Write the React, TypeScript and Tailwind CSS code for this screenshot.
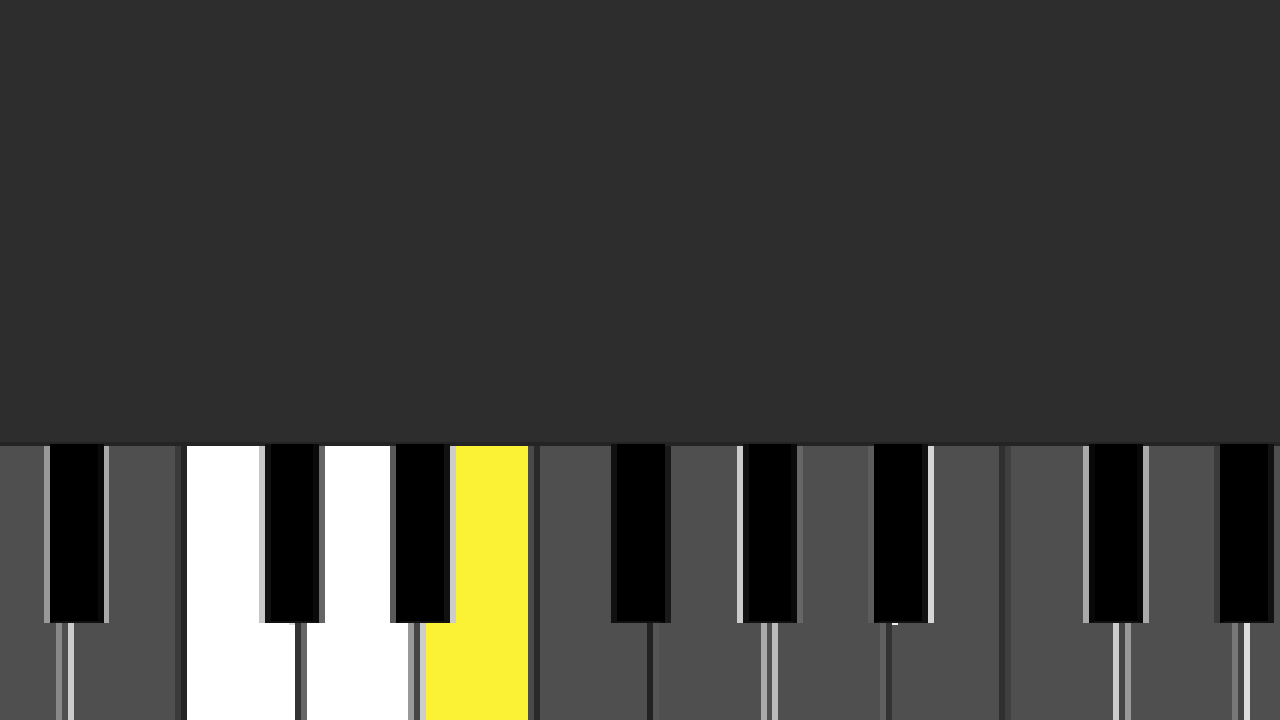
import React from "react";

const whiteKeys: string[] = [
  "w-[62px] bg-[#4f4f4f] border-r-[6px] border-r-[#888888]",
  "w-[6px] bg-[#4f4f4f]",
  "w-[113px] bg-[#4f4f4f] border-x-[6px] border-l-[#cccccc] border-r-[#3a3a3a]",
  "w-[120px] bg-white border-x-[6px] border-l-[#252525] border-r-[#333333]",
  "w-[113px] bg-white border-x-[6px] border-l-[#666666] border-r-[#999999]",
  "w-[6px] bg-[#444444]",
  "w-[114px] bg-[#fbf236] border-x-[6px] border-l-[#cccccc] border-r-[#4a4a4a]",
  "w-[119px] bg-[#4f4f4f] border-x-[6px] border-l-[#2a2a2a] border-r-[#222222]",
  "w-[114px] bg-[#4f4f4f] border-x-[6px] border-l-[#555555] border-r-[#aaaaaa]",
  "w-[5px] bg-[#4f4f4f]",
  "w-[114px] bg-[#4f4f4f] border-x-[6px] border-l-[#bbbbbb] border-r-[#606060]",
  "w-[119px] bg-[#4f4f4f] border-x-[6px] border-l-[#333333] border-r-[#2f2f2f]",
  "w-[114px] bg-[#4f4f4f] border-x-[6px] border-l-[#3f3f3f] border-r-[#cccccc]",
  "w-[6px] bg-[#444444]",
  "w-[113px] bg-[#4f4f4f] border-x-[6px] border-l-[#999999] border-r-[#777777]",
  "w-[6px] bg-[#444444]",
  "w-[114px] bg-[#4f4f4f] border-l-[6px] border-l-[#dddddd]",
];

type BK = { pos: string; ls: string; body: string; rs: string; mark?: string };

const blackKeys: BK[] = [
  { pos: "left-[44px] w-[65px]", ls: "bg-[#999999]", body: "border-l-[#000000] border-r-[#0a0a0a]", rs: "w-[5px] bg-[#aaaaaa]" },
  { pos: "left-[259px] w-[66px]", ls: "bg-[#c8c8c8]", body: "border-l-[#111111] border-r-[#0a0a0a]", rs: "w-[6px] bg-[#666666]", mark: "left-[30px] bg-[#dddddd]" },
  { pos: "left-[390px] w-[66px]", ls: "bg-[#5a5a5a]", body: "border-l-[#000000] border-r-[#111111]", rs: "w-[6px] bg-[#cccccc]" },
  { pos: "left-[605px] w-[66px]", ls: "bg-[#4f4f4f]", body: "border-l-[#111111] border-r-[#000000]", rs: "w-[6px] bg-[#1a1a1a]" },
  { pos: "left-[737px] w-[66px]", ls: "bg-[#cccccc]", body: "border-l-[#111111] border-r-[#0a0a0a]", rs: "w-[6px] bg-[#666666]" },
  { pos: "left-[868px] w-[66px]", ls: "bg-[#5c5c5c]", body: "border-l-[#000000] border-r-[#111111]", rs: "w-[6px] bg-[#d6d6d6]", mark: "left-[24px] bg-[#eeeeee]" },
  { pos: "left-[1083px] w-[66px]", ls: "bg-[#aaaaaa]", body: "border-l-[#080808] border-r-[#080808]", rs: "w-[6px] bg-[#aaaaaa]" },
  { pos: "left-[1214px] w-[66px]", ls: "bg-[#3a3a3a]", body: "border-l-[#000000] border-r-[#111111]", rs: "w-[6px] bg-[#4f4f4f]" },
];

export default function App() {
  return (
    <div className="w-[1280px] h-[720px] flex flex-col bg-[#2d2d2d] overflow-hidden">
      <div className="h-[442px] shrink-0 bg-[#2d2d2d]" />
      <div className="h-[4px] shrink-0 bg-[#242424]" />
      <div className="relative flex-1 flex">
        {whiteKeys.map((c, i) => (
          <div key={i} className={"h-full shrink-0 " + c} />
        ))}
        {blackKeys.map((k, i) => (
          <div key={i} className={"absolute top-[-2px] h-[179px] flex " + k.pos}>
            <div className={"w-[6px] mt-[2px] shrink-0 " + k.ls} />
            <div className={"flex-1 bg-black border-x-[6px] border-b-[2px] border-b-[#111111] " + k.body} />
            <div className={"mt-[2px] shrink-0 " + k.rs} />
            {k.mark && <div className={"absolute top-[179px] w-[6px] h-[2px] " + k.mark} />}
          </div>
        ))}
      </div>
    </div>
  );
}
